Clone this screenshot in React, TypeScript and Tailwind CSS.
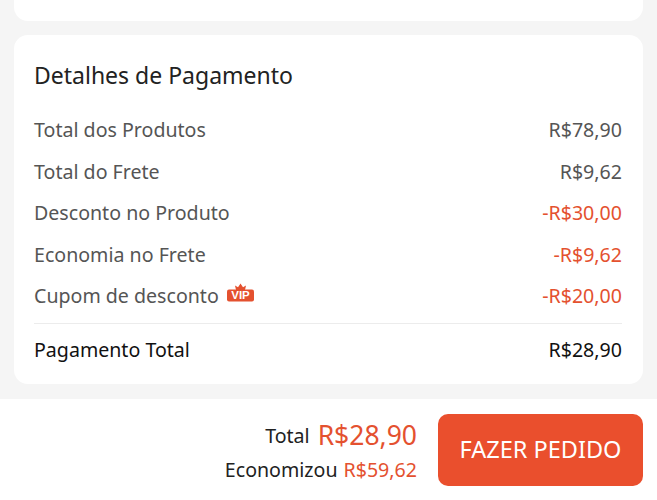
import React from 'react';

const rows = [
  { label: 'Total dos Produtos', value: 'R$78,90' },
  { label: 'Total do Frete', value: 'R$9,62' },
  { label: 'Desconto no Produto', value: '-R$30,00', discount: true },
  { label: 'Economia no Frete', value: '-R$9,62', discount: true },
  { label: 'Cupom de desconto', value: '-R$20,00', discount: true, vip: true },
];

const VipBadge = () => (
  <svg width="27" height="20" viewBox="0 0 27 20" className="ml-[8px] -mt-[5px]">
    <path d="M9 7 L8 2.5 L11 4.2 L13.5 0.5 L16 4.2 L19 2.5 L18 7 Z" fill="#e4512f" />
    <rect x="0" y="6.5" width="27" height="12" rx="2" fill="#e4512f" />
    <text x="13.5" y="16.4" textAnchor="middle" fontSize="11.5" fontWeight="700" fill="#fff" fontFamily="'Liberation Sans', sans-serif">VIP</text>
  </svg>
);

export default function App() {
  return (
    <div className="w-[657px] h-[500px] overflow-hidden flex flex-col bg-[#f5f5f5] font-['Noto_Sans',sans-serif]">
      <div className="flex-1 flex flex-col gap-[14px] px-[14px]">
        {/* previous card, cut off at the top */}
        <div className="h-[21px] bg-white rounded-b-[14px]" />

        <div className="h-[349px] bg-white rounded-[14px] pl-[20px] pr-[21px] pt-[23px]">
          <h2 className="text-[23px] leading-[34px] text-[#222]">Detalhes de Pagamento</h2>

          <div className="mt-[17px] flex flex-col">
            {rows.map(row => (
              <div key={row.label} className="h-[41.5px] flex items-center justify-between text-[19.6px] text-[#555]">
                <span className="flex items-center">
                  {row.label}
                  {row.vip && <VipBadge />}
                </span>
                <span className={row.discount ? 'text-[#e4512f]' : ''}>{row.value}</span>
              </div>
            ))}
          </div>

          <div className="mt-[6px] border-t border-[#ececec] h-[53px] flex items-center justify-between text-[19.6px] text-[#111]">
            <span>Pagamento Total</span>
            <span>R$28,90</span>
          </div>
        </div>
      </div>

      {/* bottom bar */}
      <div className="h-[101px] bg-white flex items-start justify-end pt-[15px] pr-[14px]">
        <div className="flex flex-col items-end mr-[21px]">
          <div className="flex items-center h-[43px] text-[#222]">
            <span className="text-[19.6px]">Total</span>
            <span className="ml-[8px] text-[26.5px] text-[#e4512f]">R$28,90</span>
          </div>
          <div className="flex items-center h-[25px] text-[19.6px] text-[#222]">
            <span>Economizou</span>
            <span className="ml-[6px] text-[#e4512f]">R$59,62</span>
          </div>
        </div>
        <button className="w-[205px] h-[72px] rounded-[10px] bg-[#ea4f2d] text-white text-[23.5px]">FAZER PEDIDO</button>
      </div>
    </div>
  );
}
